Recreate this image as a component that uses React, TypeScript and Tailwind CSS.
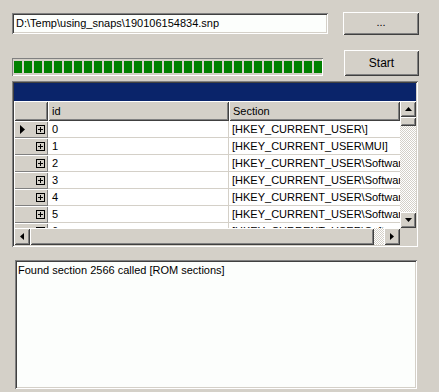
import React from "react";

const raised =
  "bg-[#d4d0c8] shadow-[inset_1px_1px_#ffffff,inset_-1px_-1px_#404040,inset_2px_2px_#d4d0c8,inset_-2px_-2px_#808080]";
const sunken =
  "shadow-[inset_1px_1px_#808080,inset_-1px_-1px_#ffffff,inset_2px_2px_#404040,inset_-2px_-2px_#d4d0c8]";
const checker =
  "bg-[image:repeating-conic-gradient(#ffffff_0_25%,#d4d0c8_0_50%)] bg-[length:2px_2px]";

const rows = [
  { id: "0", section: "[HKEY_CURRENT_USER\\]" },
  { id: "1", section: "[HKEY_CURRENT_USER\\MUI]" },
  { id: "2", section: "[HKEY_CURRENT_USER\\Software]" },
  { id: "3", section: "[HKEY_CURRENT_USER\\Software]" },
  { id: "4", section: "[HKEY_CURRENT_USER\\Software]" },
  { id: "5", section: "[HKEY_CURRENT_USER\\Software]" },
  { id: "6", section: "[HKEY_CURRENT_USER\\Software]" },
];

function Arrow({ dir }: { dir: "up" | "down" | "left" | "right" }) {
  const d = {
    up: "M0 4L3.5 0L7 4Z",
    down: "M0 0L3.5 4L7 0Z",
    left: "M4 0L0 3.5L4 7Z",
    right: "M0 0L4 3.5L0 7Z",
  }[dir];
  const vert = dir === "up" || dir === "down";
  return (
    <svg width={vert ? 7 : 4} height={vert ? 4 : 7} viewBox={vert ? "0 0 7 4" : "0 0 4 7"}>
      <path d={d} fill="#000000" />
    </svg>
  );
}

function PlusBox() {
  return (
    <svg width="9" height="9" viewBox="0 0 9 9">
      <rect x="0.5" y="0.5" width="8" height="8" fill="none" stroke="#000000" />
      <path d="M2 4.5H7M4.5 2V7" stroke="#000000" />
    </svg>
  );
}

export default function App() {
  return (
    <div className="w-[439px] h-[392px] bg-[#d4d0c8] text-black text-[11px] leading-none font-['Liberation_Sans',Arial,sans-serif] overflow-hidden">
      {/* file path + browse */}
      <div className="flex pt-[12px] pl-[12px]">
        <div className={`mt-[1px] w-[316px] h-[21px] bg-[#fcfefc] ${sunken} flex items-center pl-[4px]`}>
          D:\Temp\using_snaps\190106154834.snp
        </div>
        <button className={`ml-[15px] w-[76px] h-[23px] ${raised} flex items-center justify-center pb-[2px]`}>
          ...
        </button>
      </div>

      {/* progress + start */}
      <div className="flex pl-[12px] mt-[15px]">
        <div className="mt-[8px] w-[311px] h-[18px] shadow-[inset_1px_1px_#808080,inset_-1px_-1px_#ffffff] flex gap-[2px] pl-[2px] py-[3px]">
          {Array.from({ length: 31 }).map((_, i) => (
            <div key={i} className="w-[8px] h-full bg-[#008000]" />
          ))}
        </div>
        <button className={`ml-[21px] w-[75px] h-[26px] ${raised} flex items-center justify-center text-[12px]`}>
          Start
        </button>
      </div>

      {/* grid */}
      <div className={`mt-[5px] ml-[12px] w-[406px] h-[166px] p-[2px] ${sunken} bg-[#d4d0c8]`}>
        <div className="h-[18px] bg-[#0a246a]" />
        <div className="flex">
          <div className="w-[386px] h-[127px] overflow-hidden bg-white">
            <div className="flex h-[20px]">
              <div className={`w-[34px] ${raised}`} />
              <div className={`w-[181px] ${raised} flex items-center pl-[4px]`}>id</div>
              <div className={`flex-1 ${raised} flex items-center pl-[4px]`}>Section</div>
            </div>
            {rows.map((r, i) => (
              <div key={r.id} className="flex h-[17px]">
                <div className="w-[34px] bg-[#d4d0c8] shadow-[inset_1px_1px_#ffffff,inset_-1px_-1px_#808080] flex items-center justify-end pr-[3px] relative">
                  {i === 0 && (
                    <svg className="absolute left-[6px] top-[4px]" width="5" height="9" viewBox="0 0 5 9">
                      <path d="M0 0L5 4.5L0 9Z" fill="#000000" />
                    </svg>
                  )}
                  <PlusBox />
                </div>
                <div className="w-[181px] border-b border-r border-[#d4d0c8] flex items-center pl-[4px]">
                  {r.id}
                </div>
                <div className="flex-1 min-w-0 border-b border-[#d4d0c8] flex items-center pl-[3px] whitespace-nowrap overflow-hidden">
                  {r.section}
                </div>
              </div>
            ))}
          </div>
          <div className="w-[16px] h-[127px] flex flex-col">
            <div className={`h-[16px] ${raised} flex items-center justify-center`}>
              <Arrow dir="up" />
            </div>
            <div className={`h-[9px] ${raised}`} />
            <div className={`flex-1 ${checker}`} />
            <div className={`h-[16px] ${raised} flex items-center justify-center`}>
              <Arrow dir="down" />
            </div>
          </div>
        </div>
        <div className="flex h-[17px]">
          <div className={`w-[16px] ${raised} flex items-center justify-center`}>
            <Arrow dir="left" />
          </div>
          <div className={`w-[344px] ${raised}`} />
          <div className={`w-[10px] ${checker}`} />
          <div className={`w-[16px] ${raised} flex items-center justify-center`}>
            <Arrow dir="right" />
          </div>
          <div className="w-[16px] bg-[#d4d0c8]" />
        </div>
      </div>

      {/* log memo */}
      <div className={`mt-[13px] ml-[15px] w-[402px] h-[129px] bg-[#fcfefc] ${sunken} pt-[5px] pl-[3px]`}>
        Found section 2566 called [ROM sections]
      </div>
    </div>
  );
}
